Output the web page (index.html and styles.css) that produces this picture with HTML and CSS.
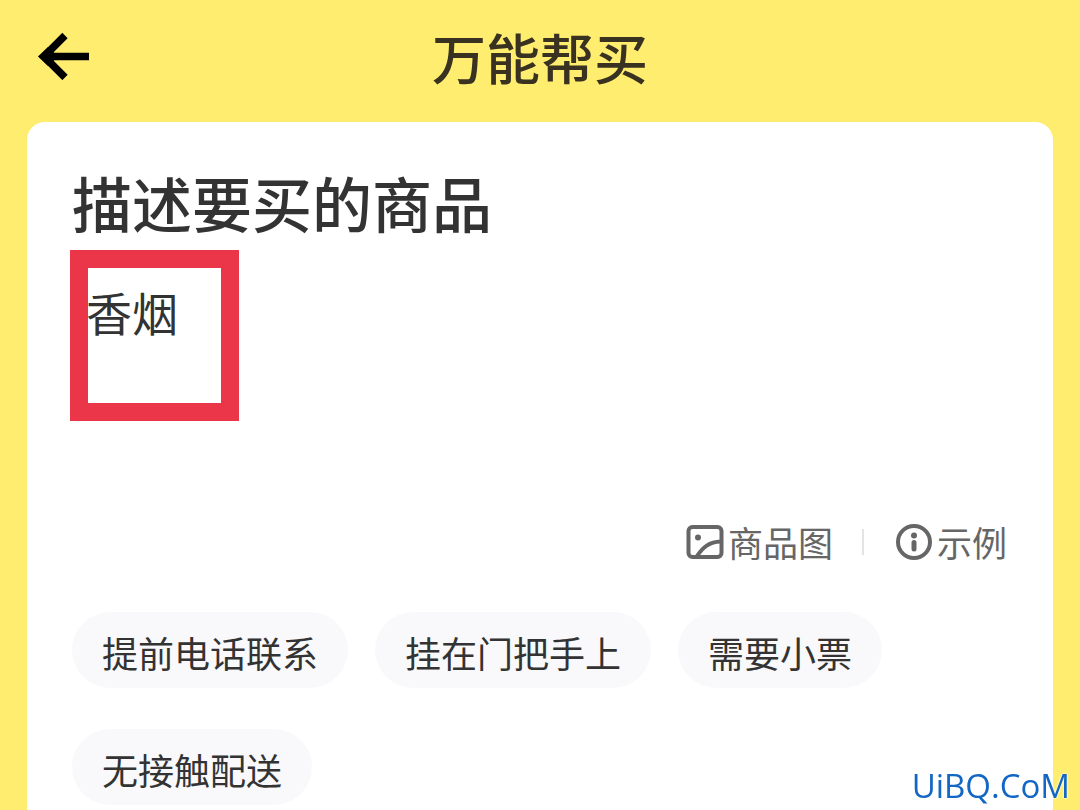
FILE: index.html
```html
<!DOCTYPE html>
<html lang="zh-CN">
<head>
<meta charset="utf-8">
<meta name="viewport" content="width=device-width, initial-scale=1">
<title>万能帮买</title>
<link rel="stylesheet" href="styles.css">
</head>
<body>
<header class="topbar">
  <button class="back" type="button" aria-label="返回">
    <svg class="back-icon" viewBox="0 0 52 48" aria-hidden="true">
      <path d="M27 3.500 6 24.500 27 45.500M8 24.500H51" fill="none" stroke="#000" stroke-width="7.500"/>
      <path d="M0 24.500 10 15 20 24.500 10 34Z" fill="#000"/>
    </svg>
  </button>
  <h1 class="title">万能帮买</h1>
</header>
<main class="card">
  <div class="field">
    <label class="heading" for="goods">描述要买的商品</label>
    <div class="entry">
      <textarea class="goods" id="goods">香烟</textarea>
      <span class="marker"></span>
    </div>
  </div>
  <div class="tools">
    <button class="tool" type="button">
      <svg class="tool-icon" viewBox="0 0 38 38" fill="none" stroke="#666" aria-hidden="true">
        <rect x="2.500" y="4" width="33" height="30" rx="4" stroke-width="4"/>
        <circle cx="12" cy="14.500" r="3" fill="#666" stroke="none"/>
        <path d="M11 33C17 24 23 19 35 18.500" stroke-width="4"/>
      </svg>
      商品图
    </button>
    <span class="divider"></span>
    <button class="tool" type="button">
      <svg class="tool-icon" viewBox="0 0 38 38" fill="none" stroke="#666" aria-hidden="true">
        <circle cx="19" cy="19" r="16" stroke-width="4"/>
        <circle cx="19" cy="12.500" r="3" fill="#666" stroke="none"/>
        <path d="M19 19.500V26" stroke-width="5" stroke-linecap="round"/>
      </svg>
      示例
    </button>
  </div>
  <div class="chips">
    <button class="chip" type="button">提前电话联系</button>
    <button class="chip" type="button">挂在门把手上</button>
    <button class="chip" type="button">需要小票</button>
    <button class="chip" type="button">无接触配送</button>
  </div>
</main>
<div class="watermark">UiBQ.CoM</div>
</body>
</html>
```
FILE: styles.css
```css
* {
  box-sizing: border-box;
}

body {
  margin: 0;
  min-height: 100vh;
  display: flex;
  flex-direction: column;
  background: #ffed70;
  color: #333;
  font-family: "Noto Sans CJK SC", sans-serif;
}

button {
  padding: 0;
  border: 0;
  background: none;
  color: inherit;
  font: inherit;
  cursor: pointer;
}

.topbar {
  display: grid;
  grid-template-columns: 52px 1fr 52px;
  align-items: center;
  padding: 17px 38px 25px;
}

.back {
  height: 48px;
  margin-bottom: 2px;
}

.back-icon {
  display: block;
  width: 52px;
  height: 48px;
}

.title {
  margin: 0;
  color: #3a3220;
  font-size: 54px;
  line-height: 80px;
  font-weight: 500;
  text-align: center;
}

.card {
  flex: 1;
  margin: 0 27px;
  padding: 36px 46px 0 45px;
  border-radius: 18px 18px 0 0;
  background: #fefffe;
}

.heading {
  display: block;
  padding-bottom: 4px;
  font-size: 60px;
  line-height: 88px;
  font-weight: 500;
}

.entry {
  position: relative;
}

.goods {
  display: block;
  width: 100%;
  height: 256px;
  padding: 27px 0 0 14px;
  border: 0;
  outline: 0;
  background: none;
  color: inherit;
  font-family: inherit;
  font-size: 46px;
  line-height: 68px;
  resize: none;
}

.marker {
  position: absolute;
  top: 0;
  left: -2px;
  width: 169px;
  height: 171px;
  border: 18px solid #eb3549;
  pointer-events: none;
}

.tools {
  display: flex;
  justify-content: flex-end;
  align-items: center;
}

.tool {
  display: flex;
  align-items: center;
  gap: 4px;
  color: #666;
  font-size: 35px;
  line-height: 72px;
}

.tool-icon {
  width: 38px;
  height: 38px;
}

.divider {
  width: 2px;
  height: 26px;
  margin: 0 31px 0 29px;
  background: #e4e4e4;
}

.chips {
  display: flex;
  flex-wrap: wrap;
  gap: 41px 27px;
  margin-top: 34px;
}

.chip {
  padding: 4px 30px 0;
  border-radius: 38px;
  background: #f9f9fb;
  font-size: 36px;
  line-height: 72px;
}

.watermark {
  position: fixed;
  right: 10px;
  bottom: 4px;
  color: #1266c4;
  font-family: "Open Sans", sans-serif;
  font-size: 33px;
  line-height: 40px;
  font-weight: 500;
  text-shadow: 0 0 2px #fff, 0 0 2px #fff;
}
```
